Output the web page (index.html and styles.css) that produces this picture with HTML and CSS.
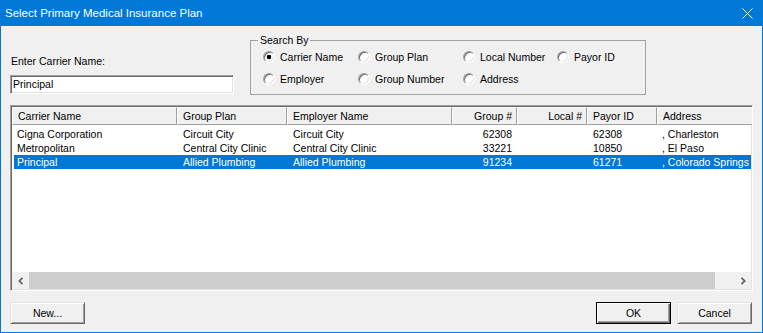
FILE: index.html
```html
<!DOCTYPE html>
<html>
<head>
<meta charset="utf-8">
<link rel="stylesheet" href="styles.css">
</head>
<body>
<div class="window">
  <div class="titlebar">
    <span class="title">Select Primary Medical Insurance Plan</span>
    <svg class="close" width="11" height="11" viewBox="0 0 11 11"><path d="M0.5 0.5 L10.5 10.5 M10.5 0.5 L0.5 10.5" stroke="#fff" stroke-width="1" fill="none"/></svg>
  </div>
  <div class="content">
    <div class="top">
      <div class="carrier">
        <div class="label">Enter Carrier Name:</div>
        <div class="input">Principal</div>
      </div>
      <fieldset class="group">
        <legend class="legend">Search By</legend>
        <div class="radios">
          <div class="opt"><span class="radio checked"></span>Carrier Name</div>
          <div class="opt"><span class="radio"></span>Group Plan</div>
          <div class="opt"><span class="radio"></span>Local Number</div>
          <div class="opt"><span class="radio"></span>Payor ID</div>
          <div class="opt"><span class="radio"></span>Employer</div>
          <div class="opt"><span class="radio"></span>Group Number</div>
          <div class="opt"><span class="radio"></span>Address</div>
        </div>
      </fieldset>
    </div>
    <div class="list">
      <div class="header">
        <div class="hc h1">Carrier Name</div>
        <div class="hc h2">Group Plan</div>
        <div class="hc h3">Employer Name</div>
        <div class="hc h4 right">Group #</div>
        <div class="hc h5 right">Local #</div>
        <div class="hc h6">Payor ID</div>
        <div class="hc h7">Address</div>
      </div>
      <div class="rows">
        <div class="row">
          <div class="c c1">Cigna Corporation</div>
          <div class="c c2">Circuit City</div>
          <div class="c c3">Circuit City</div>
          <div class="c c4 right">62308</div>
          <div class="c c5 right"></div>
          <div class="c c6">62308</div>
          <div class="c c7">, Charleston</div>
        </div>
        <div class="row">
          <div class="c c1">Metropolitan</div>
          <div class="c c2">Central City Clinic</div>
          <div class="c c3">Central City Clinic</div>
          <div class="c c4 right">33221</div>
          <div class="c c5 right"></div>
          <div class="c c6">10850</div>
          <div class="c c7">, El Paso</div>
        </div>
        <div class="row sel">
          <div class="c c1">Principal</div>
          <div class="c c2">Allied Plumbing</div>
          <div class="c c3">Allied Plumbing</div>
          <div class="c c4 right">91234</div>
          <div class="c c5 right"></div>
          <div class="c c6">61271</div>
          <div class="c c7">, Colorado Springs</div>
        </div>
      </div>
      <div class="hscroll">
        <div class="sb-btn"><svg width="8" height="8" viewBox="0 0 8 8"><path d="M5.5 0.8 L2.3 4 L5.5 7.2" stroke="#606060" stroke-width="1.7" fill="none"/></svg></div>
        <div class="thumb"></div>
        <div class="track"></div>
        <div class="sb-btn"><svg width="8" height="8" viewBox="0 0 8 8"><path d="M2.5 0.8 L5.7 4 L2.5 7.2" stroke="#606060" stroke-width="1.7" fill="none"/></svg></div>
      </div>
    </div>
    <div class="buttons">
      <div class="btn">New...</div>
      <div class="btn-group">
        <div class="btn default">OK</div>
        <div class="btn">Cancel</div>
      </div>
    </div>
  </div>
</div>
</body>
</html>
```

FILE: styles.css
```css
body {
  margin: 0;
  background: #f0f0f0;
  font-family: "Liberation Sans", Arial, sans-serif;
  font-size: 10.5px;
  color: #000;
}

.window {
  width: 763px;
  height: 333px;
  box-sizing: border-box;
  border: 1px solid #0078d7;
  border-top: 0;
  display: flex;
  flex-direction: column;
  background: #f0f0f0;
}

.titlebar {
  height: 26px;
  flex: none;
  background: #0078d7;
  color: #fff;
  display: flex;
  align-items: center;
  justify-content: space-between;
  padding: 0 9px 0 4px;
  font-size: 11.5px;
}

.close {
  display: block;
}

.content {
  flex: 1;
  display: flex;
  flex-direction: column;
  padding: 0 9px 8px 9px;
}

.top {
  display: flex;
  align-items: flex-start;
  height: 79px;
  flex: none;
}

.carrier {
  width: 224px;
  margin-top: 29px;
  display: flex;
  flex-direction: column;
}

.label {
  height: 13px;
  line-height: 13px;
  padding-left: 1px;
}

.input {
  margin-top: 7px;
  height: 19px;
  box-sizing: border-box;
  border: 1px solid;
  border-color: #a0a0a0 #fff #fff #a0a0a0;
  box-shadow: inset 1px 1px 0 #696969, inset -1px -1px 0 #e3e3e3;
  background: #fff;
  padding-left: 2px;
  line-height: 17px;
}

.group {
  margin: 8px 0 0 16px;
  width: 396px;
  height: 61px;
  box-sizing: border-box;
  border: 1px solid #a0a0a0;
  padding: 0;
  min-width: 0;
}

.legend {
  padding: 0 2px;
  margin-left: 7px;
  line-height: 12px;
}

.radios {
  display: grid;
  grid-template-columns: 95px 105px 94px auto;
  row-gap: 8px;
  padding: 4px 0 0 12px;
}

.opt {
  display: flex;
  align-items: center;
  gap: 5px;
  height: 14px;
  white-space: nowrap;
}

.radio {
  width: 12px;
  height: 12px;
  box-sizing: border-box;
  border-radius: 50%;
  border: 1px solid;
  border-color: #a0a0a0 #fff #fff #a0a0a0;
  box-shadow: inset 1px 1px 0 #696969, inset -1px -1px 0 #e3e3e3;
  background: #fff;
  flex: none;
}

.radio.checked {
  background: radial-gradient(circle, #000 0 2px, #fff 2.6px);
}

.list {
  height: 186px;
  flex: none;
  box-sizing: border-box;
  border: 1px solid;
  border-color: #a0a0a0 #fff #fff #a0a0a0;
  box-shadow: inset 1px 1px 0 #696969, inset -1px -1px 0 #e3e3e3;
  background: #fff;
  padding: 1px;
  display: flex;
  flex-direction: column;
  overflow: hidden;
}

.header {
  display: flex;
  height: 18px;
  flex: none;
  white-space: nowrap;
}

.hc {
  flex: none;
  box-sizing: border-box;
  border: 1px solid;
  border-color: #fff #a0a0a0 #a0a0a0 #fff;
  background: #f0f0f0;
  line-height: 16px;
  padding: 0 4px 0 5px;
  overflow: hidden;
}

.h1 { width: 165px; }
.h2 { width: 110px; }
.h3 { width: 165px; }
.h4 { width: 65px; }
.h5 { width: 70px; }
.h6 { width: 70px; }
.h7 { width: 100px; }

.right {
  text-align: right;
}

.rows {
  flex: 1;
  padding-top: 2px;
}

.row {
  display: flex;
  height: 14px;
  line-height: 14px;
  margin-left: 2px;
  white-space: nowrap;
}

.row.sel {
  background: #0078d7;
  color: #fff;
}

.c {
  flex: none;
  box-sizing: border-box;
  padding-left: 6px;
  overflow: hidden;
}

.c1 { width: 163px; padding-left: 3px; }
.c2 { width: 110px; }
.c3 { width: 165px; }
.c4 { width: 65px; padding-left: 0; padding-right: 5px; }
.c5 { width: 70px; padding-left: 0; padding-right: 5px; }
.c6 { width: 70px; }
.c7 { width: 100px; padding-left: 5px; }

.hscroll {
  height: 17px;
  flex: none;
  display: flex;
  background: #f0f0f0;
}

.sb-btn {
  width: 17px;
  flex: none;
  display: flex;
  align-items: center;
  justify-content: center;
}

.sb-btn svg {
  display: block;
}

.thumb {
  width: 686px;
  flex: none;
  background: #cdcdcd;
}

.track {
  flex: 1;
}

.buttons {
  margin-top: 11px;
  display: flex;
  justify-content: space-between;
  padding-right: 1px;
}

.btn-group {
  display: flex;
  gap: 6px;
}

.btn {
  width: 75px;
  height: 22px;
  box-sizing: border-box;
  border: 1px solid;
  border-color: #e3e3e3 #696969 #696969 #e3e3e3;
  box-shadow: inset 1px 1px 0 #fff, inset -1px -1px 0 #a0a0a0;
  background: #f0f0f0;
  display: flex;
  align-items: center;
  justify-content: center;
}

.btn.default {
  border-color: #000;
  box-shadow: inset 1px 1px 0 #fff, inset -1px -1px 0 #696969, inset -2px -2px 0 #a0a0a0;
}
```
